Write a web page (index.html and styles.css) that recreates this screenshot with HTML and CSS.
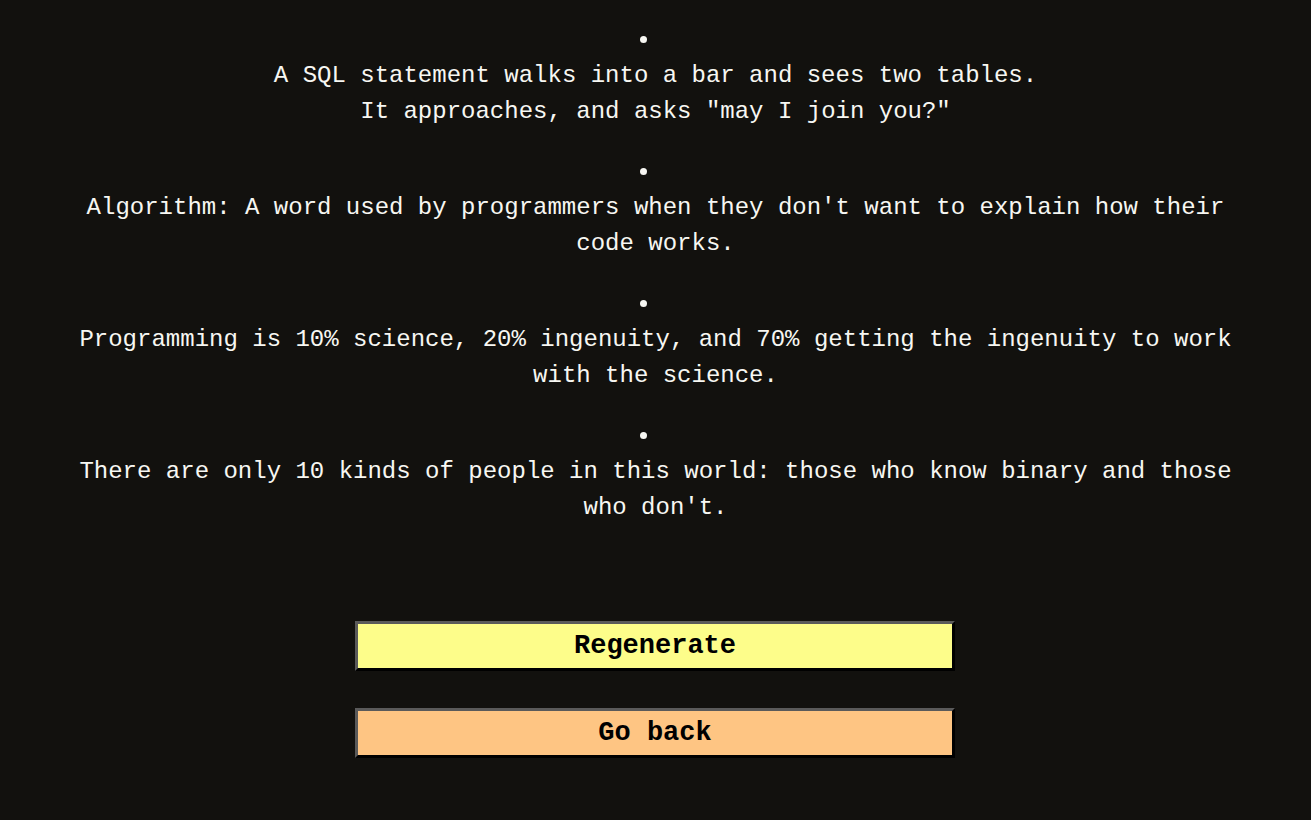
FILE: index.html
```html
<!DOCTYPE html>
<html lang="en">
<head>
<meta charset="utf-8">
<title>Programming Jokes</title>
<link rel="stylesheet" href="styles.css">
</head>
<body>
<main class="page">
  <ul class="jokes">
    <li class="joke"><p>A SQL statement walks into a bar and sees two tables.<br>It approaches, and asks "may I join you?"</p></li>
    <li class="joke"><p>Algorithm: A word used by programmers when they don't want to explain how their code works.</p></li>
    <li class="joke"><p>Programming is 10% science, 20% ingenuity, and 70% getting the ingenuity to work with the science.</p></li>
    <li class="joke"><p>There are only 10 kinds of people in this world: those who know binary and those who don't.</p></li>
  </ul>
  <div class="actions">
    <button class="btn btn-regen" type="button">Regenerate</button>
    <button class="btn btn-back" type="button">Go back</button>
  </div>
</main>
</body>
</html>
```

FILE: styles.css
```css
html, body {
  margin: 0;
  padding: 0;
  background: #12110e;
}

body {
  font-family: "Liberation Mono", "Courier New", monospace;
  font-size: 24px;
  line-height: 36px;
  color: #f7f7f2;
}

.page {
  padding-top: 22px;
  display: flex;
  flex-direction: column;
  align-items: center;
}

.jokes {
  list-style: disc inside;
  margin: 0;
  padding: 0;
  width: 1190px;
  text-align: center;
}

.joke {
  margin: 0 0 24px;
}

.joke p {
  margin: 0;
}

.actions {
  margin-top: 71px;
  padding-right: 1px;
  display: flex;
  flex-direction: column;
  align-items: center;
  gap: 37px;
}

.btn {
  display: block;
  width: 600px;
  height: 50px;
  box-sizing: border-box;
  border-width: 3px;
  border-style: solid;
  border-color: #5a5a5a #000 #000 #5a5a5a;
  font-family: "Liberation Mono", "Courier New", monospace;
  font-size: 27px;
  font-weight: bold;
  color: #000;
  padding: 0;
  cursor: pointer;
}

.btn-regen {
  background: #fdfd8a;
}

.btn-back {
  background: #fec583;
}
```
